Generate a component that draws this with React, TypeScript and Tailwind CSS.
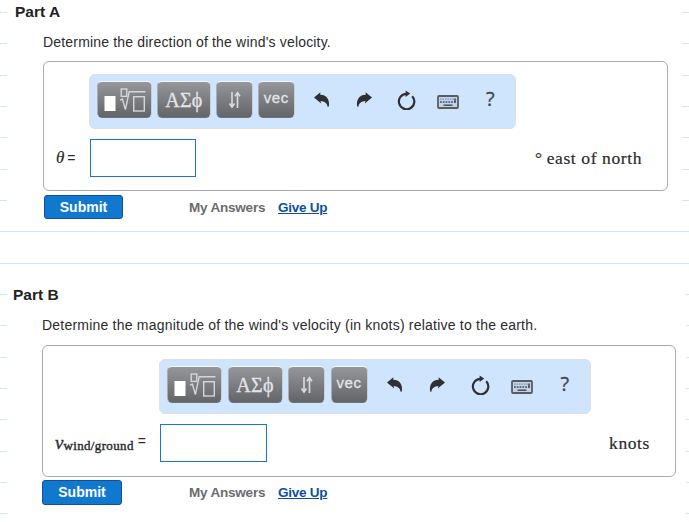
import type { ReactNode } from "react";
import clsx from "clsx";

const UndoIcon = ({ flipped }: { flipped?: boolean }) => (
  <svg
    className={clsx("h-4 w-4", flipped && "-scale-x-100")}
    viewBox="0 0 16 16"
    fill="#303030"
  >
    <path d="M0 5.4 6.4.2 6.2 2.8C11.8 2.6 16 6.6 14.9 14.6L13.6 14.8C13.4 11.4 10.6 9 6.5 8.9L7.2 11.4Z" />
  </svg>
);

const ResetIcon = () => (
  <svg className="h-5 w-5" viewBox="0 0 20 20" fill="none">
    <path
      d="M16.2 6.2A7.7 7.7 0 1 1 10.4 3.8"
      stroke="#303030"
      strokeWidth="2.2"
    />
    <path d="M9.6.4 14.2 3.6 9.6 7Z" fill="#303030" />
  </svg>
);

const KeyboardIcon = () => (
  <svg className="h-[14px] w-[22px]" viewBox="0 0 22 14" fill="none">
    <rect x="1" y="1" width="20" height="12" rx="1" fill="#c0d3ec" stroke="#5b5b5e" strokeWidth="1.8" />
    <path d="M3 4.2H19" stroke="#7d97bd" strokeWidth="1.2" strokeDasharray="1.5 1" />
    <path d="M3 7H19" stroke="#4a4d55" strokeWidth="1.4" strokeDasharray="1.8 1" />
    <path d="M18 3.5V7.5" stroke="#444" strokeWidth="1.4" />
    <path d="M6.5 10.2H15.5" stroke="#444" strokeWidth="1.4" />
  </svg>
);

const TemplateIcon = () => (
  <svg className="h-6 w-[43px]" viewBox="0 0 43 24" fill="none">
    <rect x="1.5" y="8" width="11" height="15" fill="#fff" />
    <g stroke="#d6d6d8" strokeWidth="1.4">
      <rect x="18.2" y="1" width="5.6" height="7.4" />
      <path d="M17 12.2 19.5 11.2 22.4 21.6 26.2 3.7H42.5" />
      <rect x="30.7" y="8.7" width="10.6" height="14.3" />
    </g>
  </svg>
);

const ArrowsIcon = () => (
  <svg className="h-[18px] w-[14px]" viewBox="0 0 14 18" fill="none">
    <g stroke="#dcdcde" strokeWidth="1.6">
      <path d="M4 1V16M9.5 17V2" />
      <path d="M1.5 12.5 4 16 6.5 12.5M7 5.2 9.5 1.7 12 5.2" />
    </g>
  </svg>
);

const ToolButton = ({ className, children }: { className: string; children: ReactNode }) => (
  <button
    className={clsx(
      "flex h-[37px] shrink-0 items-center justify-center rounded-[5px] border border-t-[#f4f7fb] border-r-[#c9cdd4] border-b-[#6f7276] border-l-[#a9adb3] bg-linear-to-b from-[#96979a] to-[#646568] text-[#e4e4e6]",
      className
    )}
  >
    {children}
  </button>
);

const Toolbar = ({ wide }: { wide?: boolean }) => {
  const cell = clsx("flex shrink-0 items-center justify-center", wide ? "w-[42.5px]" : "w-[42.2px]");

  return (
    <div
      className={clsx(
        "flex h-[55px] rounded-md border border-[#dedfe2] bg-[#cfe5fe] pt-1.5 pl-[7px]",
        wide ? "ml-[116px] w-[432px]" : "ml-[45px] w-[427px]"
      )}
    >
      <div className={clsx("flex", wide ? "gap-[5.5px]" : "gap-[5.2px]")}>
        <ToolButton className={wide ? "w-[55px]" : "w-[54.5px]"}>
          <TemplateIcon />
        </ToolButton>
        <ToolButton className={wide ? "w-[55px]" : "w-[54.5px]"}>
          <span className="font-['Liberation_Serif',serif] text-[20px] tracking-[0.3px] [-webkit-text-stroke:0.3px]">
            ΑΣϕ
          </span>
        </ToolButton>
        <ToolButton className={wide ? "w-[37px]" : "w-[36.5px]"}>
          <ArrowsIcon />
        </ToolButton>
        <ToolButton className={wide ? "w-[37px]" : "w-[36.5px]"}>
          <span className="pb-0.5 text-[15px] tracking-[0.6px] [-webkit-text-stroke:0.3px]">vec</span>
        </ToolButton>
      </div>
      <div className="ml-1.5 flex h-[37px]">
        <button className={cell}>
          <UndoIcon />
        </button>
        <button className={cell}>
          <UndoIcon flipped />
        </button>
        <button className={cell}>
          <ResetIcon />
        </button>
        <button className={clsx(cell, "pt-1")}>
          <KeyboardIcon />
        </button>
        <button
          className={clsx(
            cell,
            "pb-0.5 font-['Open_Sans',sans-serif] text-[20px] text-[#444] [-webkit-text-stroke:0.3px]"
          )}
        >
          ?
        </button>
      </div>
    </div>
  );
};

const Actions = ({ wide }: { wide?: boolean }) => (
  <div className="flex text-[14px] font-bold">
    <button
      className={clsx(
        "rounded-[3px] border border-[#14509a] bg-[#1079cf] text-white",
        wide ? "h-[25px] w-20" : "h-6 w-[79px]"
      )}
    >
      Submit
    </button>
    <span
      className={clsx(
        "w-[89px] pt-[3px] text-[13.5px] tracking-[-0.2px] text-[#6b6c6f]",
        wide ? "ml-[67px]" : "ml-[66px]"
      )}
    >
      My Answers
    </span>
    <a href="#" className="pt-[3px] text-[13.5px] tracking-[-0.25px] text-[#0d50a0] underline">
      Give Up
    </a>
  </div>
);

export default function App() {
  return (
    <div className="h-[522px] w-[689px] overflow-hidden bg-white bg-[repeating-linear-gradient(to_bottom,#cbe9fc_0px_1px,transparent_1px_31px,#cbe9fc_31px_32px,transparent_32px_63px,#cbe9fc_63px_64px,transparent_64px_94px)] bg-[position:0_12px] font-['Liberation_Sans',Arial,sans-serif] text-[#2b2b2e]">
      <section className="ml-[7px] h-[225px] w-[675px] bg-white pt-[2px] pl-2">
        <h2 className="h-5 text-[15.5px] leading-5 font-bold text-[#222]">Part A</h2>
        <div className="ml-[29px]">
          <p className="-ml-px pt-[10px] text-[14px] leading-5 tracking-[0.18px] whitespace-nowrap">
            Determine the direction of the wind's velocity.
          </p>
          <div className="-ml-px mt-[9px] h-[130px] w-[625px] rounded-md border border-[#aaabad] pt-3">
            <Toolbar />
            <div className="mt-[10px] flex h-[38px] items-center">
              <div className="flex w-[46px] items-center pl-3 text-[14px]">
                <i className="mr-[3px] font-['Liberation_Serif',serif] text-[17px] [-webkit-text-stroke:0.2px]">θ</i>=
              </div>
              <input className="h-[38px] w-[106px] border border-[#1679cb] bg-white" />
              <div className="ml-auto flex pt-px pr-[25px] font-['Liberation_Serif',serif] text-[17.5px] tracking-[0.6px] whitespace-nowrap [-webkit-text-stroke:0.2px]">
                <span className="mr-1">°</span>
                <span>east of north</span>
              </div>
            </div>
          </div>
          <div className="pt-1">
            <Actions />
          </div>
        </div>
      </section>

      <section className="mt-[44px] ml-[7px] h-[253px] w-[679px] bg-white pt-4 pl-1.5">
        <h2 className="h-5 text-[15.5px] leading-5 font-bold text-[#222]">Part B</h2>
        <div className="ml-[29px]">
          <p className="pt-[10px] text-[14px] leading-5 tracking-[0.215px] whitespace-nowrap">
            Determine the magnitude of the wind's velocity (in knots) relative to the earth.
          </p>
          <div className="mt-[10px] h-[132px] w-[634px] rounded-md border border-[#aaabad] pt-[13px]">
            <Toolbar wide />
            <div className="mt-[10px] flex h-[38px] items-center">
              <div className="flex w-[117px] items-center pl-3 text-[14px] whitespace-nowrap">
                <i className="font-['Liberation_Serif',serif] text-[19px] leading-6 [-webkit-text-stroke:0.3px]">v</i>
                <span className="mr-1 pt-1.5 font-['Liberation_Serif',serif] text-[13px] tracking-[0.35px] [-webkit-text-stroke:0.4px]">
                  wind/ground
                </span>
                <span className="pb-1">=</span>
              </div>
              <input className="h-[38px] w-[107px] border border-[#1679cb] bg-white" />
              <span className="ml-auto pt-px pr-[25px] font-['Liberation_Serif',serif] text-[17.5px] tracking-[0.6px] [-webkit-text-stroke:0.2px]">
                knots
              </span>
            </div>
          </div>
          <div className="pt-[3px]">
            <Actions wide />
          </div>
        </div>
      </section>
    </div>
  );
}
